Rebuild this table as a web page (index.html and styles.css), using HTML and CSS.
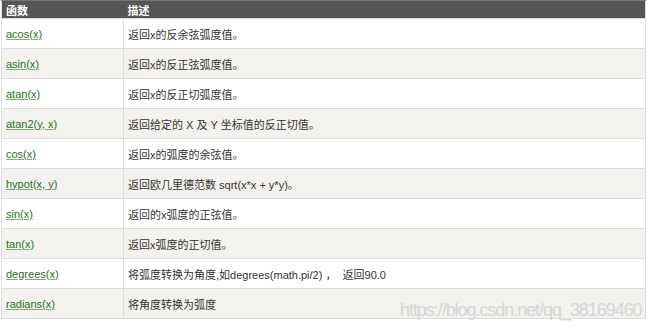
FILE: index.html
```html
<!DOCTYPE html>
<html lang="zh">
<head>
<meta charset="utf-8">
<title>math</title>
<link rel="stylesheet" href="styles.css">
</head>
<body>
<div class="wrap">
<table class="ref">
  <thead>
    <tr><th class="c1">函数</th><th>描述</th></tr>
  </thead>
  <tbody>
    <tr><td class="c1"><a href="#">acos(x)</a></td><td>返回x的反余弦弧度值。</td></tr>
    <tr><td class="c1"><a href="#">asin(x)</a></td><td>返回x的反正弦弧度值。</td></tr>
    <tr><td class="c1"><a href="#">atan(x)</a></td><td>返回x的反正切弧度值。</td></tr>
    <tr><td class="c1"><a href="#">atan2(y, x)</a></td><td>返回给定的 X 及 Y 坐标值的反正切值。</td></tr>
    <tr><td class="c1"><a href="#">cos(x)</a></td><td>返回x的弧度的余弦值。</td></tr>
    <tr><td class="c1"><a href="#">hypot(x, y)</a></td><td>返回欧几里德范数 sqrt(x*x + y*y)。</td></tr>
    <tr><td class="c1"><a href="#">sin(x)</a></td><td>返回的x弧度的正弦值。</td></tr>
    <tr><td class="c1"><a href="#">tan(x)</a></td><td>返回x弧度的正切值。</td></tr>
    <tr><td class="c1"><a href="#">degrees(x)</a></td><td>将弧度转换为角度,如degrees(math.pi/2) ，&nbsp; 返回90.0</td></tr>
    <tr><td class="c1"><a href="#">radians(x)</a></td><td>将角度转换为弧度</td></tr>
  </tbody>
</table>
<div class="watermark">https://blog.csdn.net/qq_38169460</div>
</div>
</body>
</html>
```
FILE: styles.css
```css
html, body {
  margin: 0;
  padding: 0;
  background: #ffffff;
}
.wrap {
  position: relative;
  width: 653px;
  height: 331px;
  padding: 0 0 0 1px;
  box-sizing: border-box;
}
.ref {
  width: 645px;
  border-collapse: collapse;
  font-family: "Liberation Sans", "Noto Sans CJK SC", sans-serif;
  font-size: 11px;
  color: #333333;
  border: 1px solid #dcdcdc;
  border-top: none;
}
.ref th {
  background: #555555;
  color: #ffffff;
  text-align: left;
  font-weight: bold;
  height: 18px;
  padding: 0 4px;
  box-sizing: border-box;
  border-top: 1px solid #777;
}
.ref td {
  height: 30px;
  padding: 0 4px;
  border: 1px solid #dddddd;
  box-sizing: border-box;
  vertical-align: middle;
}
.ref .c1 {
  width: 122px;
}
.ref tbody tr:nth-child(even) td {
  background: #f3f2ee;
}
.ref a {
  color: #2e6e2a;
  text-decoration: underline;
  text-decoration-color: #7fae6a;
}
.watermark {
  position: absolute;
  left: 400px;
  top: 300px;
  font-family: "Liberation Sans", sans-serif;
  font-size: 18px;
  letter-spacing: -1.05px;
  color: #d6d6d6;
  text-shadow: 0 0 1px #eeeeee;
  white-space: nowrap;
}
```
